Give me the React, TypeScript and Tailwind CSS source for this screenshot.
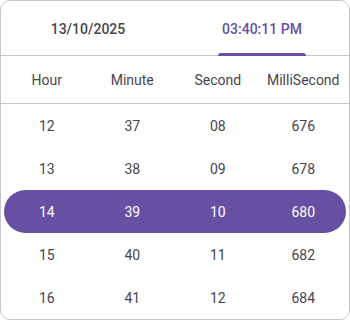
export default function App() {
  const headers = ["Hour", "Minute", "Second", "MilliSecond"];
  const rows = [
    ["12", "37", "08", "676"],
    ["13", "38", "09", "678"],
    ["14", "39", "10", "680"],
    ["15", "40", "11", "682"],
    ["16", "41", "12", "684"],
  ];
  const selected = 2;

  return (
    <div className="w-[350px] h-[320px] bg-white font-['Roboto',sans-serif]">
      <div className="w-full h-full border border-[#cac4d0] rounded-[10px] overflow-hidden flex flex-col">
        {/* Tabs */}
        <div className="h-[55px] border-b border-[#cac4d0] flex shrink-0">
          <div className="flex-1 flex items-center justify-center pt-[3px] text-[14px] font-medium text-[#49454f]">
            13/10/2025
          </div>
          <div className="flex-1 relative flex items-center justify-center pt-[3px] text-[14px] font-medium text-[#6750a4]">
            03:40:11 PM
            <div className="absolute left-[43px] right-[43px] bottom-[-1px] h-[3px] rounded-t-full bg-[#6750a4]" />
          </div>
        </div>

        {/* Column headers */}
        <div className="h-[48px] border-b border-[#cac4d0] grid grid-cols-4 px-[3px] shrink-0">
          {headers.map((h) => (
            <div key={h} className="flex items-center justify-center pt-[2px] text-[14px] text-[#49454f]">
              {h}
            </div>
          ))}
        </div>

        {/* Rows */}
        <div className="flex flex-col px-[3px]">
          {rows.map((r, i) => (
            <div
              key={i}
              className={
                i === selected
                  ? "h-[43px] grid grid-cols-4 rounded-full bg-[#6750a4] text-white"
                  : "h-[43px] grid grid-cols-4 text-[#49454f]"
              }
            >
              {r.map((v, j) => (
                <div key={j} className="flex items-center justify-center pt-[1px] text-[14px]">
                  {v}
                </div>
              ))}
            </div>
          ))}
        </div>
      </div>
    </div>
  );
}
